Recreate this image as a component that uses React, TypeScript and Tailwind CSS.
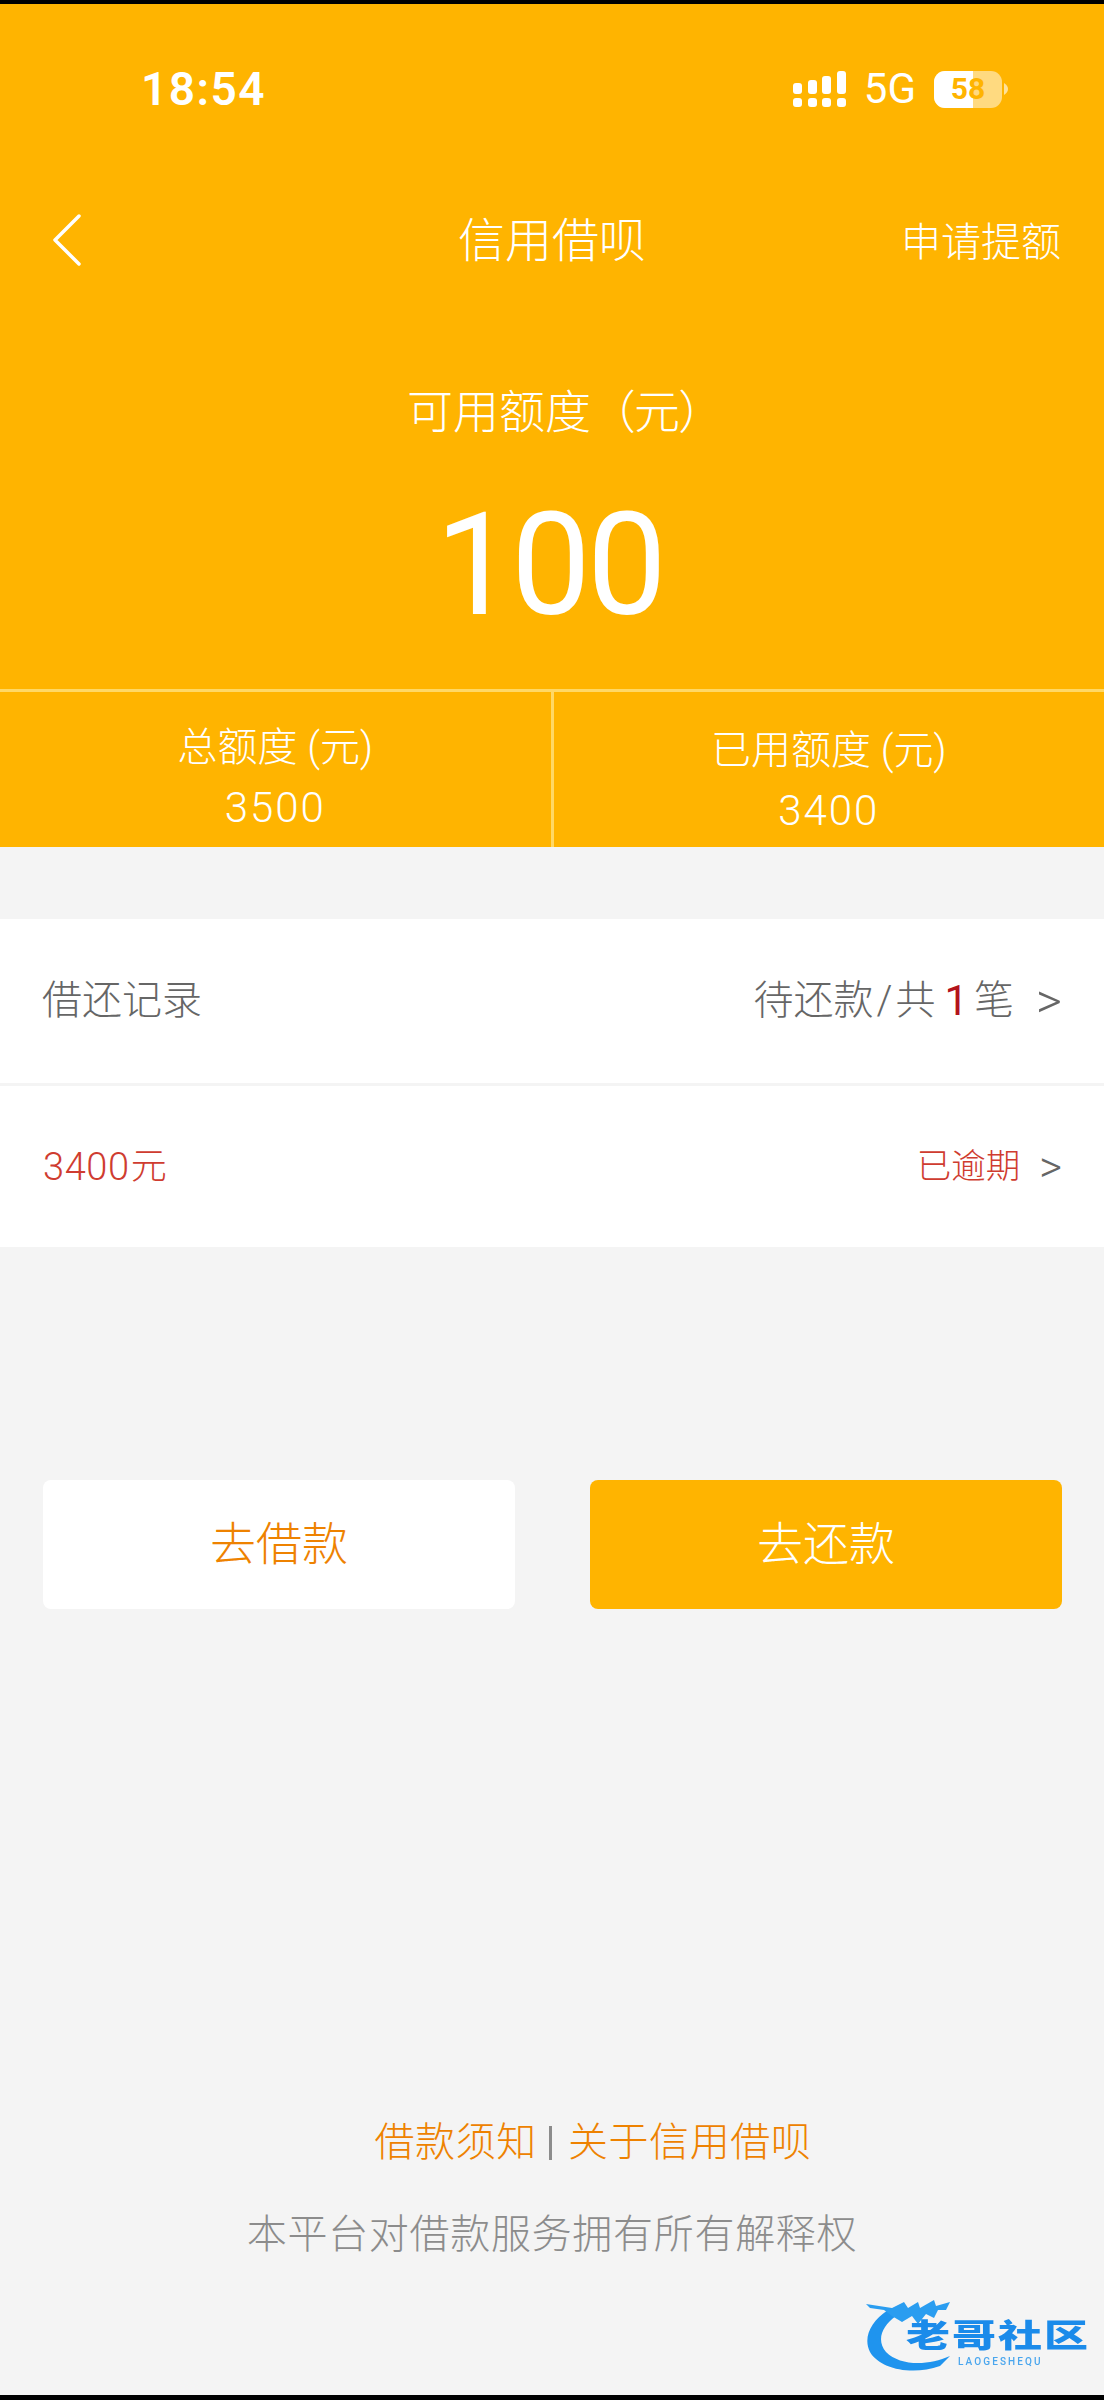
const FONT = "font-['Roboto','Noto_Sans_CJK_SC',sans-serif]"

function SignalIcon() {
  return (
    <svg width="54" height="36" viewBox="0 0 54 36" fill="white">
      <rect x="0" y="12" width="9" height="11" rx="3" />
      <rect x="15" y="9" width="9" height="14" rx="3" />
      <rect x="29" y="5" width="9" height="18" rx="3" />
      <rect x="44" y="0" width="9" height="23" rx="3" />
      <rect x="0" y="27" width="9" height="9" rx="3" />
      <rect x="15" y="27" width="9" height="9" rx="3" />
      <rect x="29" y="27" width="9" height="9" rx="3" />
      <rect x="44" y="27" width="9" height="9" rx="3" />
    </svg>
  )
}

function Battery() {
  return (
    <div className="flex items-center">
      <div className="relative h-[37px] w-[68px] overflow-hidden rounded-[11px] bg-white/50">
        <div className="h-full w-[39px] bg-white" />
        <span className="absolute inset-0 flex items-center justify-center text-[30px] font-bold leading-none text-[#ffb400]">
          58
        </span>
      </div>
      <svg width="5" height="12" viewBox="0 0 5 12" className="ml-[2px]">
        <path d="M0 0 C3 2 4 4 4 6 C4 8 3 10 0 12 Z" fill="white" fillOpacity="0.6" />
      </svg>
    </div>
  )
}

function Watermark() {
  return (
    <div className="absolute left-[862px] top-[2296px] h-[84px] w-[232px] blur-[0.7px]">
      <svg width="100" height="84" viewBox="0 0 100 84" className="absolute left-0 top-0">
        <path
          d="M26 14 C8 26 1 42 8 56 C18 73 50 80 78 70 L88 60 C66 70 38 70 24 56 C14 44 20 30 34 20 Z"
          fill="#1f94ee"
        />
        <path
          d="M4 8 L30 12 L42 6 L46 12 L56 6 L58 12 L72 4 L74 10 L88 6 L84 14 L76 14 L72 22 L64 18 L56 28 L50 20 L40 26 L30 20 L22 14 L8 12 Z"
          fill="#2a9df0"
        />
      </svg>
      <span className="absolute left-[44px] top-[24px] flex h-[44px] origin-top-left scale-y-[0.72] items-center whitespace-nowrap text-[44px] font-black leading-none tracking-[2px] text-[#1b8bea]">
        老哥社区
      </span>
      <span className="absolute left-[96px] top-[61px] whitespace-nowrap text-[10px] font-medium leading-none tracking-[2.1px] text-[#4aa6ee]">
        LAOGESHEQU
      </span>
    </div>
  )
}

function Stat({ label, value, offset }: { label: string; value: string; offset: string }) {
  return (
    <div className={`flex flex-1 flex-col items-center text-white ${offset}`}>
      <div className="flex h-[40px] items-center text-[40px] font-light leading-none">{label}</div>
      <div className="mt-[20px] flex h-[40px] items-center text-[42px] font-light leading-none tracking-[2px]">
        {value}
      </div>
    </div>
  )
}

export default function App() {
  return (
    <div className={`relative flex h-[2400px] w-[1104px] flex-col overflow-hidden bg-[#f4f4f4] ${FONT}`}>
      <div className="h-[4px] bg-black" />

      <header className="flex h-[843px] flex-col bg-[#ffb400] text-white">
        <div className="mt-[51px] flex h-[70px] items-center justify-between pl-[141px] pr-[95px]">
          <span className="text-[46px] font-semibold leading-none tracking-[1.5px]">18:54</span>
          <div className="flex items-center">
            <SignalIcon />
            <span className="ml-[17px] mr-[18px] text-[42px] font-normal leading-none">5G</span>
            <Battery />
          </div>
        </div>

        <div className="relative mt-[87px] flex h-[60px] items-center justify-center">
          <svg width="30" height="52" viewBox="0 0 30 52" fill="none" className="absolute left-[52px] top-[3px]">
            <path d="M27 2 L3 26 L27 50" stroke="white" strokeWidth="3.5" strokeLinecap="round" strokeLinejoin="round" />
          </svg>
          <span className="text-[47px] font-light leading-none">信用借呗</span>
          <span className="absolute right-[43px] top-[12px] text-[40px] font-light leading-none">申请提额</span>
        </div>

        <div className="mt-[118px] flex h-[50px] items-center justify-center pl-[6px] text-[46px] font-light leading-none">
          <span>可用额度</span>
          <span className="ml-[20px] [font-feature-settings:'palt']">（元）</span>
        </div>
        <div className="mt-[79px] flex h-[100px] items-center justify-center pr-[6px] text-[142px] font-normal leading-none tracking-[-4px]">
          100
        </div>

        <div className="mt-[73px] flex h-[161px] border-t-[3px] border-[#ffd866]">
          <Stat label="总额度 (元)" value="3500" offset="pt-[36px]" />
          <div className="w-[3px] bg-[#ffd866]" />
          <Stat label="已用额度 (元)" value="3400" offset="pt-[39px]" />
        </div>
      </header>

      <section className="mt-[72px] bg-white">
        <div className="flex h-[167px] items-center justify-between border-b-[3px] border-[#f4f4f4] px-[42px] text-[40px] font-light leading-none text-[#666]">
          <span>借还记录</span>
          <div className="flex items-center">
            <span className="flex items-center">
              待还款<span className="px-[3px]">/</span>共
              <span className="pl-[9px] pr-[6px] text-[42px] font-normal text-[#b3131b]">1</span>笔
            </span>
            <span className="ml-[22px] text-[50px]">&gt;</span>
          </div>
        </div>
        <div className="flex h-[161px] items-center justify-between pl-[43px] pr-[42px] text-[#cf3c30]">
          <span className="flex items-center text-[38px] font-light leading-none tracking-[0.6px]">
            3400<span className="ml-[1px] text-[36px]">元</span>
          </span>
          <div className="flex items-center">
            <span className="text-[34.5px] font-light leading-none">已逾期</span>
            <span className="ml-[19px] text-[44px] font-light leading-none text-[#666]">&gt;</span>
          </div>
        </div>
      </section>

      <div className="mt-[233px] flex gap-[75px] pl-[43px] pr-[42px]">
        <button className="flex h-[129px] flex-1 items-center justify-center rounded-[8px] bg-white text-[46px] font-light text-[#ee8200]">
          去借款
        </button>
        <button className="flex h-[129px] flex-1 items-center justify-center rounded-[8px] bg-[#ffb400] text-[46px] font-light text-white">
          去还款
        </button>
      </div>

      <footer className="mt-[510px] flex flex-col items-center text-[40px] font-light leading-none">
        <div className="flex h-[48px] items-center pl-[82px] tracking-[0.6px] text-[#ee8200]">
          <span>借款须知</span>
          <span className="ml-[12px] mr-[16px] h-[34px] w-[3px] bg-[#8c8c8c]" />
          <span>关于信用借呗</span>
        </div>
        <div className="mt-[44px] flex h-[48px] items-center tracking-[0.7px] text-[#8c8c8c]">
          本平台对借款服务拥有所有解释权
        </div>
      </footer>

      <Watermark />
      <div className="absolute inset-x-0 bottom-0 h-[5px] bg-black" />
    </div>
  )
}
